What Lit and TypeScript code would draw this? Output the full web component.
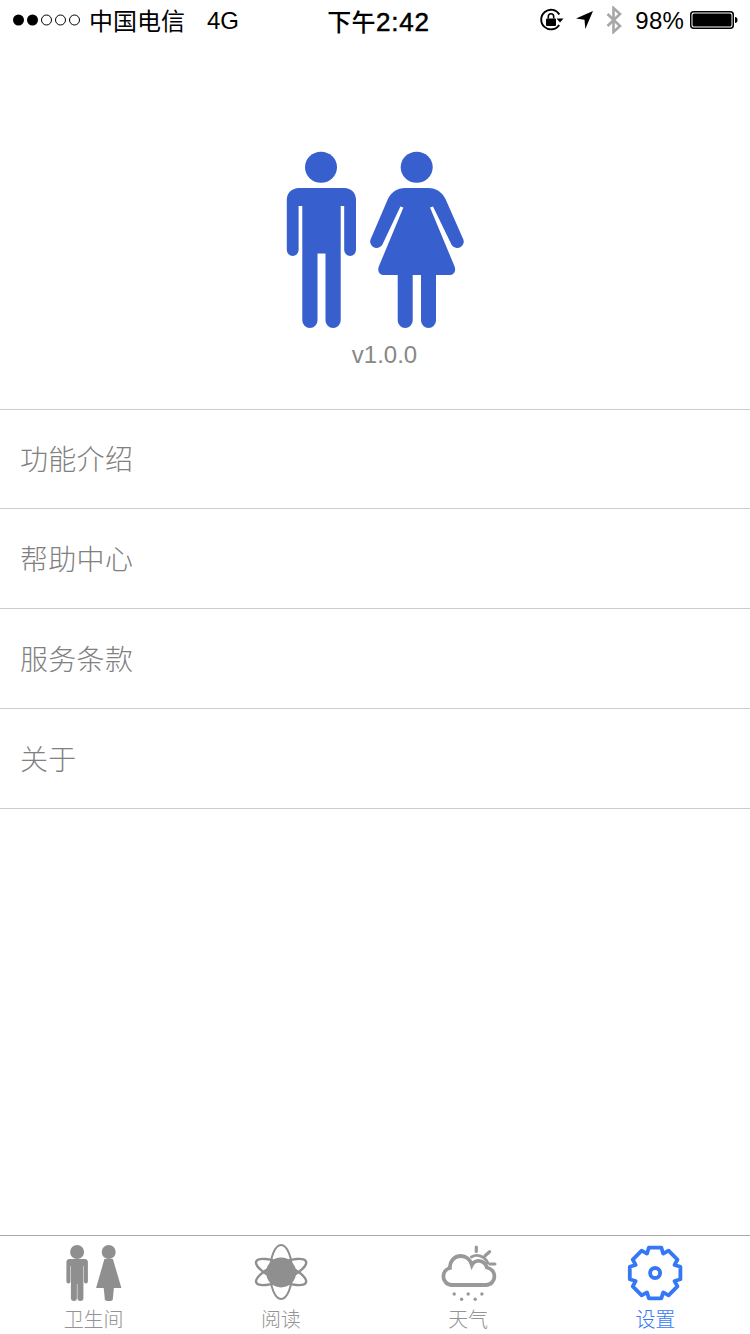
import { LitElement, html, css, svg } from "lit";
import { customElement } from "lit/decorators.js";

function gearPath(cx: number, cy: number): string {
  const pts: string[] = [];
  const R = 25.3, r = 19.5, hwO = 6.3, hwI = 8;
  for (let i = 0; i < 8; i++) {
    const a = (i * Math.PI) / 4 - Math.PI / 2;
    const ux = Math.cos(a), uy = Math.sin(a);
    const vx = -uy, vy = ux;
    const p = (d: number, w: number) => `${(cx + ux * d + vx * w).toFixed(2)} ${(cy + uy * d + vy * w).toFixed(2)}`;
    pts.push(p(r, -hwI), p(R, -hwO), p(R, hwO), p(r, hwI));
  }
  return "M" + pts.join("L") + "Z";
}

const MAN = "M299 188H344.5C351 188 356 193 356 199.5V250a5.9 5.9 0 0 1-11.8 0V206H340.7V320.5a7.6 7.6 0 0 1-15.2 0V253.5H317.5V320.5a7.6 7.6 0 0 1-15.2 0V206H298.6V250a5.9 5.9 0 0 1-11.8 0V199.5C286.8 193 292 188 299 188Z";
const WOMAN = "M405 188H428.4C436 188 442.5 192.5 445.5 199L462.7 238A6 6 0 0 1 451.7 245L433 206.5L430 207.5L454.4 266C456.5 271 454 275 449 275H436V320.5A7.5 7.5 0 0 1 421 320.5V275H412.7V320.5A7.5 7.5 0 0 1 397.7 320.5V275H384.4C379.4 275 376.9 271 379 266L403.4 207.5L400.4 206.5L382.2 245A6 6 0 0 1 371.2 238L387.9 199C390.9 192.5 397.4 188 405 188Z";

@customElement("app-root")
export class AppRoot extends LitElement {
  static styles = css`
    :host {
      display: flex;
      flex-direction: column;
      width: 750px;
      height: 1334px;
      background: #fff;
      font-family: "Liberation Sans", "Noto Sans CJK SC", sans-serif;
      overflow: hidden;
      opacity: 0.999;
    }
    .status {
      height: 40px;
      display: grid;
      grid-template-columns: 1fr auto 1fr;
      align-items: center;
      padding: 0 12px 0 13px;
      font-size: 24px;
      color: #000;
      flex: none;
    }
    .left, .right { display: flex; align-items: center; }
    .right { justify-content: flex-end; }
    .dots { display: block; margin-right: 9px; }
    .carrier { font-family: "Noto Sans CJK SC", sans-serif; font-weight: 400; font-size: 24px; line-height: 40px; }
    .net { margin-left: 22px; padding-top: 2px; }
    .time { font-family: "Noto Sans CJK SC", sans-serif; font-weight: 500; font-size: 24px; margin-left: 6px; letter-spacing: 0.3px; }
    .time .num { font-family: "Liberation Sans", sans-serif; font-size: 26px; letter-spacing: 0.8px; -webkit-text-stroke: 0.5px #000; }
    .status svg { display: block; flex: none; }
    .pct { margin: 0 6px 0 12px; letter-spacing: 0.2px; padding-top: 2px; }
    .hero {
      height: 369px;
      flex: none;
      display: flex;
      flex-direction: column;
      align-items: center;
    }
    .logo { display: block; margin-top: 110px; }
    .ver {
      margin-left: 19px;
      margin-top: 10px;
      font-size: 24px;
      line-height: 30px;
      color: #888;
    }
    .list { flex: 1; border-top: 1px solid #ccc; margin: 0; padding: 0; list-style: none; }
    .list li {
      box-sizing: border-box;
      height: 100px;
      display: flex;
      align-items: center;
      padding: 0 0 2px 20px;
      border-bottom: 1px solid #ccc;
      font-family: "Noto Sans CJK SC", sans-serif;
      font-weight: 300;
      font-size: 28px;
      letter-spacing: 0.3px;
      color: #808080;
    }
    .list li:first-child { height: 99px; }
    .tabs {
      flex: none;
      height: 98px;
      border-top: 1px solid #aaa;
      background: #fff;
      display: flex;
      padding-right: 1px;
    }
    .tab {
      flex: 1;
      display: flex;
      flex-direction: column;
      align-items: center;
      color: #949494;
      font-family: "Noto Sans CJK SC", sans-serif;
      font-weight: 300;
      font-size: 20px;
      line-height: 28px;
    }
    .tab svg { display: block; margin-top: 8px; margin-bottom: 1px; }
    .tab.on { color: #3478f6; }
  `;

  private rows = ["功能介绍", "帮助中心", "服务条款", "关于"];

  render() {
    return html`
      <div class="status">
        <div class="left">
          <svg class="dots" width="67" height="14" viewBox="0 0 67 14">
            <circle cx="5.5" cy="7" r="5.5" fill="#000"/>
            <circle cx="19.5" cy="7" r="5.5" fill="#000"/>
            <circle cx="33.5" cy="7" r="5" fill="none" stroke="#000"/>
            <circle cx="47.5" cy="7" r="5" fill="none" stroke="#000"/>
            <circle cx="61.5" cy="7" r="5" fill="none" stroke="#000"/>
          </svg>
          <span class="carrier">中国电信</span>
          <span class="net">4G</span>
        </div>
        <div class="time">下午<span class="num">2:42</span></div>
        <div class="right">
          <svg width="24" height="24" viewBox="0 0 24 24">
            <path d="M19.2 17A9.8 9.8 0 1 1 19.4 6.5" fill="none" stroke="#000" stroke-width="1.9"/>
            <path d="M16.500 10.500h7l-3.500 4z" fill="#000"/>
            <rect x="6" y="10.500" width="10" height="7.500" rx="1" fill="#000"/>
            <path d="M8.300 10.500V8.500a2.700 2.700 0 0 1 5.400 0v2" fill="none" stroke="#000" stroke-width="1.600"/>
          </svg>
          <svg style="margin-left:12px" width="19" height="20" viewBox="0 0 19 20">
            <path d="M17 1L9.300 19L8.500 9.800L0 8.500Z" fill="#000"/>
          </svg>
          <svg style="margin-left:10px" width="18" height="28" viewBox="0 0 18 28">
            <path d="M2.500 8L15 20L8.500 26V2L15 8L2.500 20" fill="none" stroke="#a8a8a8" stroke-width="2.600"/>
          </svg>
          <span class="pct">98%</span>
          <svg width="48" height="20" viewBox="0 0 48 20">
            <rect x="0.75" y="1.75" width="42.5" height="16.5" rx="3" fill="none" stroke="#000" stroke-width="1.5"/>
            <rect x="2.5" y="3.5" width="39" height="13" rx="1.5" fill="#000"/>
            <path d="M45 7c1.5 0 2.5 1 2.5 3s-1 3-2.500 3z" fill="#000"/>
          </svg>
        </div>
      </div>

      <div class="hero">
        <svg class="logo" width="190" height="180" viewBox="280 150 190 180">
          <ellipse cx="321" cy="167.300" rx="16" ry="15.500" fill="#375fce"/>
          <ellipse cx="416.700" cy="167.300" rx="16" ry="15.500" fill="#375fce"/>
          <path d="${MAN}" fill="#375fce"/>
          <path d="${WOMAN}" fill="#375fce"/>
        </svg>
        <div class="ver">v1.0.0</div>
      </div>

      <ul class="list">
        ${this.rows.map((r) => html`<li>${r}</li>`)}
      </ul>

      <div class="tabs">
        <div class="tab">
          <svg width="60" height="60" viewBox="63.600 1244 60 60">
            ${svg`<g fill="#8f8f8f">
              <circle cx="76.700" cy="1252" r="7"/>
              <circle cx="108.300" cy="1252" r="7"/>
              <path d="M69 1259H84.500C86.500 1259 87.500 1260.500 87.500 1262V1281.500a2 2 0 0 1-4 0V1266H83V1298a3 3 0 0 1-6 0V1284H76.500V1298a3 3 0 0 1-6 0V1266H70V1281.500a2 2 0 0 1-4 0V1262C66 1260.500 67 1259 69 1259Z"/>
              <path d="M104 1259H112.500L121 1288H113.500L112.500 1298a2.700 2.700 0 0 1-2.700 3H107a2.700 2.700 0 0 1-2.700-3L103.300 1288H95.700Z"/>
            </g>`}
          </svg>
          <span>卫生间</span>
        </div>
        <div class="tab">
          <svg width="60" height="60" viewBox="250.900 1244 60 60">
            ${svg`<g fill="none" stroke="#8f8f8f">
              <ellipse stroke-width="2" cx="281" cy="1272" rx="11" ry="27"/>
              <ellipse stroke-width="2.400" cx="281" cy="1272" rx="27" ry="8.500" transform="rotate(23 281 1272)"/>
              <ellipse stroke-width="2.400" cx="281" cy="1272" rx="27" ry="8.500" transform="rotate(-23 281 1272)"/>
            </g>
            <circle cx="281" cy="1272.500" r="15" fill="#8f8f8f"/>`}
          </svg>
          <span>阅读</span>
        </div>
        <div class="tab">
          <svg width="60" height="60" viewBox="438.100 1244 60 60">
            ${svg`<g fill="none" stroke="#999" stroke-linecap="round">
              <path stroke-width="3.800" d="M452 1285H486C491 1285 494.500 1281 494.500 1276.500C494.500 1272 491.500 1268.500 487 1267.500C486 1263 481 1260 477 1261C474.500 1261.500 473 1263 472 1265C470.500 1259.500 466 1256 461 1256C454 1256 449.500 1262 450 1268C446 1269 443.500 1272.500 443.500 1276.500C443.500 1281 447 1285 452 1285Z"/>
              <path stroke-width="2.800" d="M471.500 1257C477 1253.500 485 1256 488 1263"/>
              <path stroke-width="3.200" d="M476.400 1247V1251.500M489.700 1251.700L485.200 1255.800M490 1264H495"/>
            </g>
            <g fill="#999">
              <circle cx="454.300" cy="1294" r="1.700"/><circle cx="468.300" cy="1294" r="1.700"/><circle cx="482" cy="1294" r="1.700"/>
              <circle cx="461.700" cy="1299.300" r="1.700"/><circle cx="475.300" cy="1299.300" r="1.700"/>
            </g>`}
          </svg>
          <span>天气</span>
        </div>
        <div class="tab on">
          <svg width="60" height="60" viewBox="625.400 1244 60 60">
            ${svg`<g fill="none" stroke="#3478f6" stroke-width="3.800" stroke-linejoin="round">
              <path d="${gearPath(655.5, 1273)}"/>
              <circle cx="655.500" cy="1273" r="5"/>
            </g>`}
          </svg>
          <span>设置</span>
        </div>
      </div>
    `;
  }
}
